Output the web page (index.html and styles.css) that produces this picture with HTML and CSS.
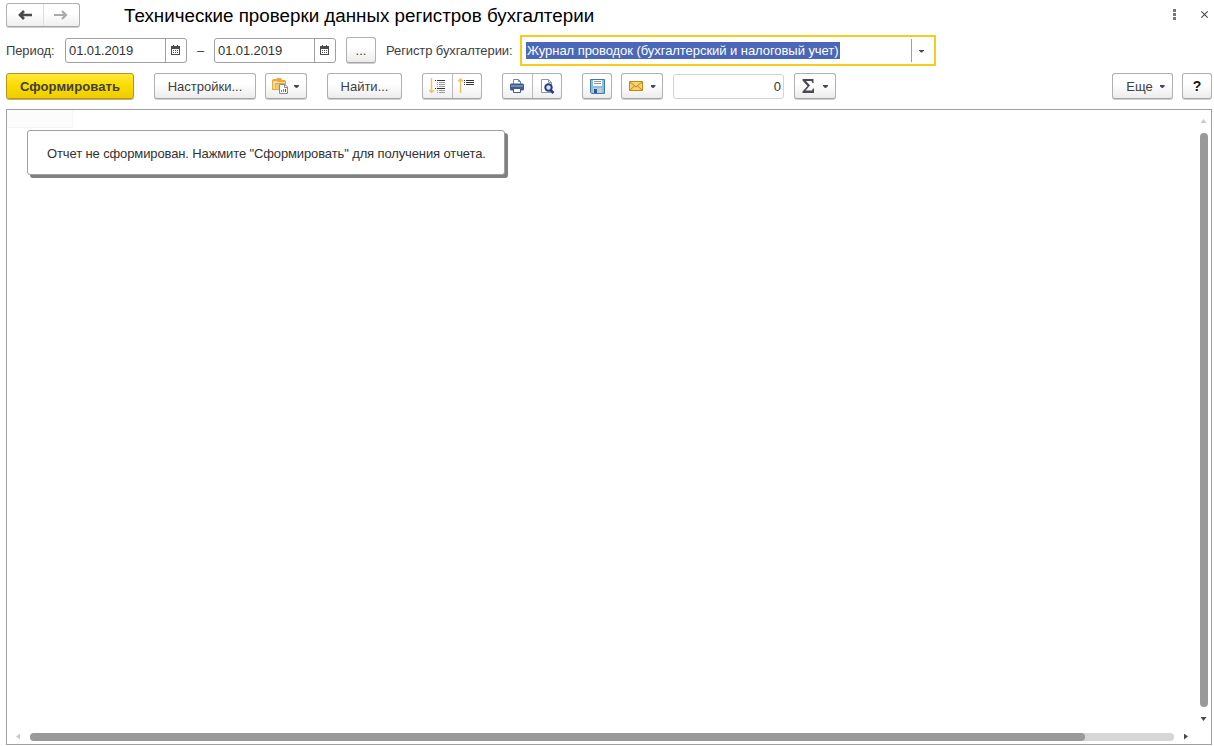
FILE: index.html
```html
<!DOCTYPE html>
<html lang="ru">
<head>
<meta charset="utf-8">
<title>Технические проверки данных регистров бухгалтерии</title>
<link rel="stylesheet" href="styles.css">
</head>
<body>
<div class="window">
  <header class="titlebar">
    <div class="group nav">
      <button class="cell"><svg width="16" height="12" viewBox="0 0 16 12"><path d="M2 6h13M7 2L3 6l4 4" fill="none" stroke="#4a4a4e" stroke-width="2.6"/></svg></button>
      <button class="cell"><svg width="16" height="12" viewBox="0 0 16 12"><path d="M1 6h12M9 2l4 4-4 4" fill="none" stroke="#aaa" stroke-width="2.2"/></svg></button>
    </div>
    <h1 class="title">Технические проверки данных регистров бухгалтерии</h1>
    <svg class="more-icon" width="3" height="11" viewBox="0 0 3 11"><path d="M0 0h3v3H0zM0 4h3v3H0zM0 8h3v3H0z" fill="#77777b"/></svg>
    <svg class="close-icon" width="7" height="7" viewBox="0 0 7 7"><path d="M.3.3l6.4 6.4M6.7.3L.3 6.7" stroke="#4c4858" stroke-width="1.1"/></svg>
  </header>

  <div class="filters">
    <span class="label period">Период:</span>
    <div class="field date"><span class="value">01.01.2019</span><span class="pick"><svg width="9" height="10" viewBox="0 0 9 10" shape-rendering="crispEdges"><path d="M0 1h9v9H0z" fill="#4b4b4f"/><path d="M1 4h7v5H1z" fill="#fff"/><path d="M2 0h1v2H2zM6 0h1v2H6zM2 5h1v1H2zM4 5h1v1H4zM6 5h1v1H6zM2 7h1v1H2zM4 7h1v1H4zM6 7h1v1H6z" fill="#4b4b4f"/></svg></span></div>
    <span class="dash">–</span>
    <div class="field date"><span class="value">01.01.2019</span><span class="pick"><svg width="9" height="10" viewBox="0 0 9 10" shape-rendering="crispEdges"><path d="M0 1h9v9H0z" fill="#4b4b4f"/><path d="M1 4h7v5H1z" fill="#fff"/><path d="M2 0h1v2H2zM6 0h1v2H6zM2 5h1v1H2zM4 5h1v1H4zM6 5h1v1H6zM2 7h1v1H2zM4 7h1v1H4zM6 7h1v1H6z" fill="#4b4b4f"/></svg></span></div>
    <button class="btn dots">...</button>
    <span class="label register">Регистр бухгалтерии:</span>
    <div class="combo"><span class="selected">Журнал проводок (бухгалтерский и налоговый учет)</span><span class="drop"><i class="caret"></i></span></div>
  </div>

  <div class="toolbar">
    <button class="btn primary">Сформировать</button>
    <button class="btn settings">Настройки...</button>
    <button class="btn menu folder"><svg width="17" height="17" viewBox="0 0 17 17"><path d="M0 12V2l1-1h3l1-1h4l1 2h3l1 1v9z" fill="#e3ab42"/><path d="M1 3h4l1 1h7v1H4L3 6v5H1z" fill="#f9dc94"/><path d="M4 6h9v5H3z" fill="#f3c868"/><path d="M7.500 6.500h5.500l2.500 2.500v6.500h-8z" fill="#fff" stroke="#8c8c90"/><path d="M12.500 6.500v3h3" fill="none" stroke="#8c8c90"/><path d="M9 12h1v2H9z" fill="#789"/><path d="M11 11h1v3h-1z" fill="#d6632b"/><path d="M13 11h1v3h-1z" fill="#555"/></svg><i class="caret"></i></button>
    <button class="btn find">Найти...</button>
    <div class="group tools order">
      <button class="cell"><svg width="17" height="16" viewBox="0 0 17 16"><path d="M2.500 0v14.500M0 12l2.500 2.500L5 12" fill="none" stroke="#f3c25c" stroke-width="1.500"/><path d="M6 2.500h1M8 2.500h8M6 10.500h1M8 10.500h8" stroke="#333"/><path d="M8 4.500h1M10 4.500h6M8 6.500h1M10 6.500h6M8 8.500h1M10 8.500h6M8 12.500h1M10 12.500h6M8 14.500h1M10 14.500h6" stroke="#999"/></svg></button>
      <button class="cell"><svg width="17" height="16" viewBox="0 0 17 16"><path d="M2.500 15V1M0 3.500L2.500 1 5 3.500" fill="none" stroke="#f3c25c" stroke-width="1.500"/><path d="M6 2.500h1M8 2.500h8M6 4.500h1M8 4.500h8M6 6.500h1M8 6.500h8" stroke="#333"/></svg></button>
    </div>
    <div class="group tools print">
      <button class="cell"><svg width="16" height="16" viewBox="0 0 16 16"><path d="M4.500 6V1.500h5l2 2V6" fill="#fff" stroke="#7186ad"/><path d="M9.500 1.500v2h2" fill="none" stroke="#7186ad"/><rect x="1" y="5.500" width="14" height="7" rx="1.500" fill="#3f5a93"/><path d="M2 8h12" stroke="#a9b8d3"/><path d="M4.500 10.500h7v4h-7z" fill="#fff" stroke="#3f5a93"/></svg></button>
      <button class="cell"><svg width="16" height="16" viewBox="0 0 16 16"><path d="M2.500 14.500v-13h7l3 3v10z" fill="#fff" stroke="#8b98ab"/><path d="M9.500 1.500v3h3" fill="none" stroke="#8b98ab"/><circle cx="9.500" cy="9.500" r="3.200" fill="#dce7f5" stroke="#213d8b" stroke-width="2"/><path d="M11.500 12l3 3" stroke="#213d8b" stroke-width="2.500"/></svg></button>
    </div>
    <button class="btn save"><svg width="15" height="15" viewBox="0 0 15 15"><path d="M.5.500h14v14h-13l-1-1z" fill="#7fc0ed" stroke="#47799f"/><path d="M3 1h9v6H3z" fill="#fff"/><path d="M4 2.500h7M4 4.500h7" stroke="#999"/><path d="M3 9h9v5H3z" fill="#c3ccd4"/><path d="M4 10h3v4H4z" fill="#36577f"/></svg></button>
    <button class="btn menu mail"><svg width="14" height="10" viewBox="0 0 14 10"><path d="M.5.5h13v9H.5z" fill="#f9cf6b" stroke="#bf8913"/><path d="M1 1l6 5 6-5M1 9l4.500-4M13 9L8.500 5" fill="none" stroke="#bf8913"/></svg><i class="caret"></i></button>
    <div class="number">0</div>
    <button class="btn menu sum"><svg width="13" height="14" viewBox="0 0 13 14"><path d="M.5 0h11v4h-1L9.500 2H4l4 4.500L3.500 11.500H10L11 9.500h1V14H.5v-1.500L5.500 7 .5 1.500z" fill="#4a4758"/></svg><i class="caret"></i></button>
    <button class="btn menu more"><span>Еще</span><i class="caret"></i></button>
    <button class="btn help">?</button>
  </div>

  <main class="report">
    <div class="sheet">
      <div class="blank-cell"></div>
      <div class="notice">Отчет не сформирован. Нажмите "Сформировать" для получения отчета.</div>
    </div>
    <div class="vbar"><i class="tri up"></i><div class="vthumb"></div><i class="tri down"></i></div>
    <div class="hbar"><i class="tri left"></i><div class="htrack"><div class="hthumb"></div></div><i class="tri right"></i></div>
  </main>
</div>
</body>
</html>
```
FILE: styles.css
```css
* { box-sizing: border-box; }
body { margin: 0; background: #fff; color: #404040; font: 13px "Liberation Sans", Arial, sans-serif; overflow: hidden; }
button { font: inherit; color: inherit; padding: 0; margin: 0; border: 0; background: none; }
svg { display: block; flex: none; }
.window { width: 1214px; height: 746px; padding: 3px 2px 1px 6px; display: flex; flex-direction: column; }

.titlebar { display: flex; align-items: flex-start; height: 32px; }
.group { display: flex; height: 26px; border: 1px solid #b0b0b0; border-bottom-color: #a4a4a4; border-radius: 3px; background: linear-gradient(#fff 40%, #efefef); box-shadow: 0 1px 0 #d0d0d0; }
.nav { width: 74px; height: 24px; }
.cell { flex: 1; display: flex; align-items: center; justify-content: center; }
.cell + .cell { border-left: 1px solid #bbb; }
.nav .cell + .cell { border-color: #ddd; }
.title { margin: 1px 0 0 44px; font-size: 18.8px; line-height: 23px; font-weight: 400; color: #000; white-space: nowrap; }
.more-icon { margin: 6px 25px 0 auto; }
.close-icon { margin: 8px 4px 0 0; }

.filters { display: flex; align-items: center; height: 31px; white-space: nowrap; }
.label { flex: none; line-height: 15px; }
.period { width: 59px; letter-spacing: -.1px; }
.register { width: 134px; margin-left: 10px; letter-spacing: -.1px; }
.field { display: flex; width: 122px; height: 25px; border: 1px solid #a0a0a0; border-radius: 3px; }
.value { flex: 1; padding-left: 3px; line-height: 23px; letter-spacing: -.1px; color: #333; }
.pick { width: 21px; padding: 0 1px 1px 0; border-left: 1px solid #a0a0a0; display: flex; align-items: center; justify-content: center; }
.dash { width: 27px; text-align: center; }
.dots { width: 30px; margin: 0 0 1px 10px; }
.combo { display: flex; align-items: center; width: 416px; height: 31px; padding-left: 4px; border: 2px solid #f8cb1c; }
.selected { background: #4a67b8; color: #fff; line-height: 17px; padding: 0 1px; letter-spacing: -.055px; }
.drop { width: 23px; height: 23px; margin-left: auto; padding-right: 3px; border-left: 1px solid #a0a0a0; display: flex; align-items: center; justify-content: center; }
.caret { width: 5px; height: 3px; margin-top: 1px; background: #4a4758; clip-path: polygon(0 0, 100% 0, 100% 34%, 60% 100%, 40% 100%, 0 34%); }

.toolbar { display: flex; height: 27px; margin-top: 7px; }
.btn { flex: none; display: flex; align-items: center; justify-content: center; height: 26px; border: 1px solid #b0b0b0; border-bottom-color: #a4a4a4; border-radius: 3px; background: linear-gradient(#fff 40%, #ececec); box-shadow: 0 1px 0 #d0d0d0; }
.primary { width: 128px; border-color: #b4961c; background: linear-gradient(#ffe93a, #fadb00 50%, #edcd00); box-shadow: 0 1px 0 #c9b15a; font-weight: 700; letter-spacing: .1px; }
.settings { width: 102px; margin-left: 20px; }
.menu { width: 42px; gap: 5px; }
.folder { margin-left: 9px; padding-right: 1px; }
.find { width: 75px; margin-left: 20px; }
.tools { width: 60px; margin-left: 20px; }
.save { width: 30px; margin-left: 20px; }
.mail { margin-left: 9px; gap: 8px; }
.number { width: 111px; height: 25px; margin: 1px 0 0 10px; padding-right: 2px; border: 1px solid #d4d4d4; border-radius: 3px; text-align: right; line-height: 23px; color: #333; }
.sum { margin-left: 10px; gap: 8px; }
.more { width: 61px; margin-left: auto; gap: 7px; padding-left: 6px; }
.help { width: 30px; margin-left: 9px; font-weight: 700; font-size: 14px; color: #111; }

.report { display: grid; grid-template: 1fr 15px / 1fr 15px; height: 636px; margin-top: 9px; border: 1px solid #a0a0a0; }
.sheet { min-width: 0; }
.blank-cell { width: 66px; height: 18px; border: solid #f5f5f5; border-width: 0 1px 1px 0; background: #fcfcfc; }
.notice { width: 478px; height: 45px; margin: 2px 0 0 20px; border: 1px solid #a0a0a0; border-radius: 3px; background: #fff; box-shadow: 3px 3px 0 #808080; padding-left: 19px; line-height: 45px; white-space: nowrap; letter-spacing: -.12px; color: #333; }
.vbar { display: flex; flex-direction: column; align-items: center; padding-top: 9px; }
.vthumb { flex: none; width: 8px; height: 574px; margin: 10px 0; border-radius: 4px; background: #999; }
.tri { flex: none; background: #4a4758; }
.up { width: 6px; height: 4px; background: #cfc8c5; clip-path: polygon(50% 0, 100% 100%, 0 100%); }
.down { width: 6px; height: 4px; clip-path: polygon(0 0, 100% 0, 50% 100%); }
.hbar { display: flex; align-items: center; padding-left: 9px; }
.left { width: 4px; height: 6px; background: #cfc8c5; clip-path: polygon(0 50%, 100% 0, 100% 100%); }
.right { width: 4px; height: 6px; clip-path: polygon(0 0, 100% 50%, 0 100%); }
.htrack { flex: none; width: 1144px; height: 8px; margin: 0 10px; border-radius: 4px; background: #d6d6d6; }
.hthumb { width: 1055px; height: 8px; border-radius: 4px; background: #999; }
```
